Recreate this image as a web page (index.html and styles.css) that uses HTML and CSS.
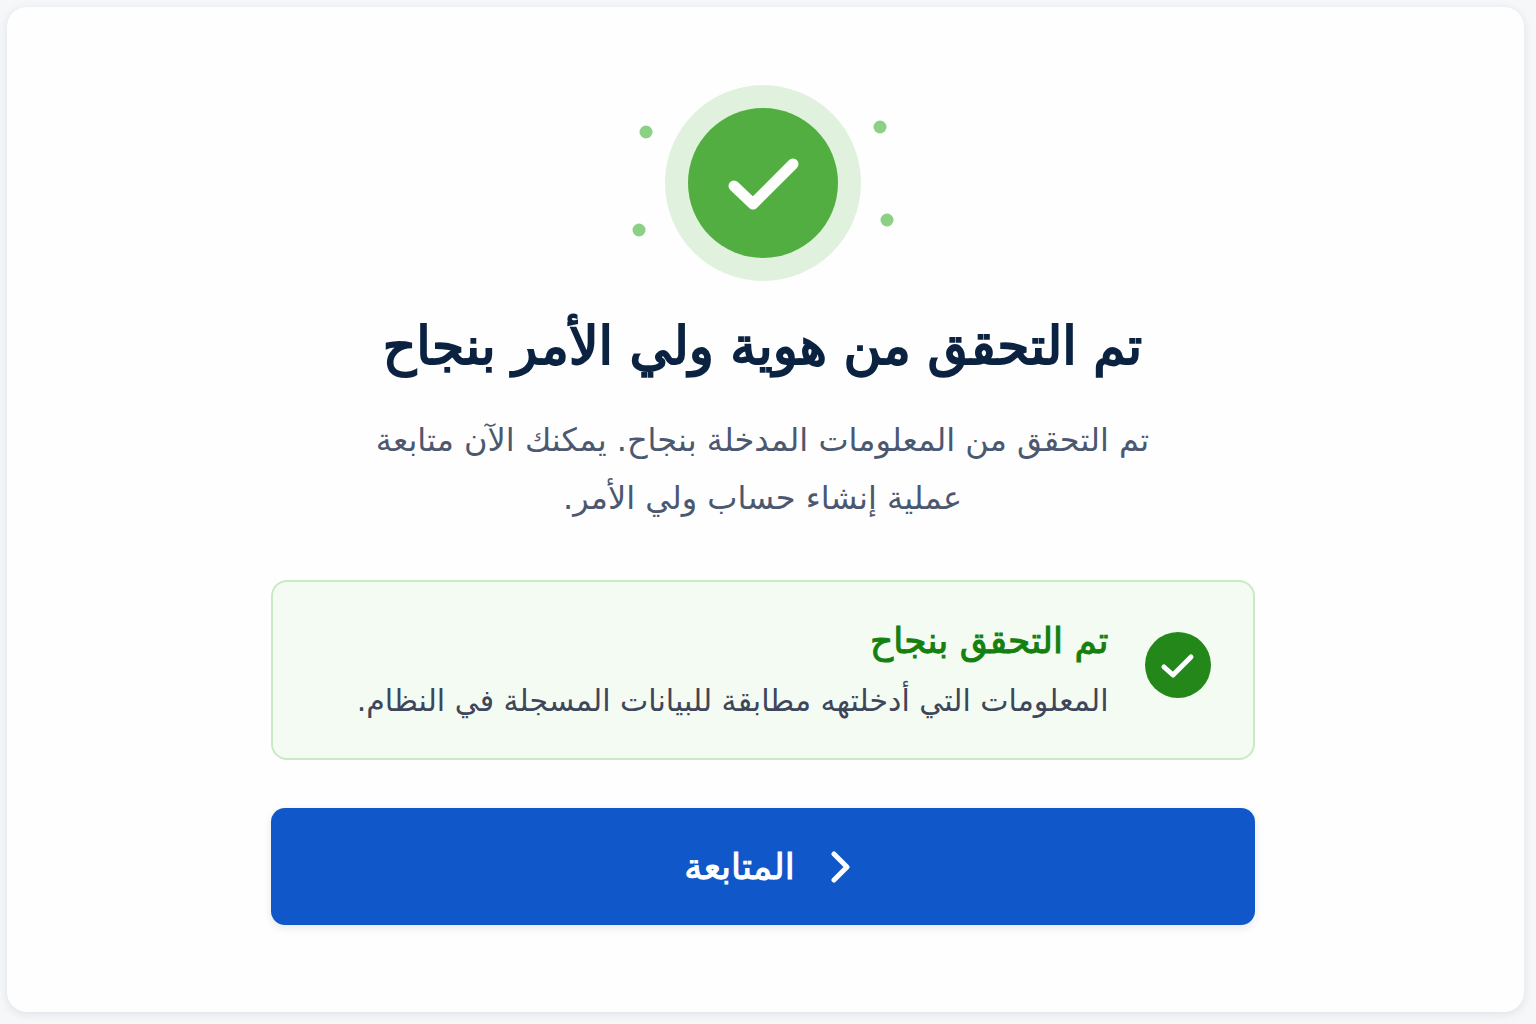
FILE: index.html
```html
<!DOCTYPE html>
<html lang="ar" dir="rtl">
<head>
    <meta charset="UTF-8">
    <meta name="viewport" content="width=device-width, initial-scale=1.0">
    <title>التحقق من هوية ولي الأمر</title>
    <link rel="stylesheet" href="styles.css">
</head>
<body>
    <main class="card">
        <svg class="hero" viewBox="0 0 264 198" aria-hidden="true">
            <circle cx="132" cy="99" r="98" fill="#e0f1de"/>
            <circle cx="132" cy="99" r="75" fill="#52ae40"/>
            <path d="M103 102L122 120L162 80" fill="none" stroke="#fff" stroke-width="11" stroke-linecap="round" stroke-linejoin="round"/>
            <g fill="#8bd083">
                <circle cx="15" cy="48" r="6.500"/>
                <circle cx="8" cy="146" r="6.500"/>
                <circle cx="249" cy="43" r="6.500"/>
                <circle cx="256" cy="136" r="6.500"/>
            </g>
        </svg>

        <h1 class="title">تم التحقق من هوية ولي الأمر بنجاح</h1>
        <p class="subtitle">تم التحقق من المعلومات المدخلة بنجاح. يمكنك الآن متابعة عملية إنشاء حساب ولي الأمر.</p>

        <section class="notice">
            <svg class="notice-icon" viewBox="0 0 66 66" aria-hidden="true">
                <circle cx="33" cy="33" r="33" fill="#24871a"/>
                <path d="M19 35L28 43L46 25" fill="none" stroke="#fff" stroke-width="5" stroke-linecap="round" stroke-linejoin="round"/>
            </svg>
            <div class="notice-body">
                <h2 class="notice-title">تم التحقق بنجاح</h2>
                <p class="notice-text">المعلومات التي أدخلتهه مطابقة للبيانات المسجلة في النظام.</p>
            </div>
        </section>

        <button class="continue" type="button">
            <svg class="chevron" viewBox="0 0 20 32" aria-hidden="true">
                <path d="M3 3L16 16L3 29" fill="none" stroke="#fff" stroke-width="5" stroke-linecap="round" stroke-linejoin="round"/>
            </svg>
            <span>المتابعة</span>
        </button>
    </main>
</body>
</html>
```

FILE: styles.css
```css
* {
    box-sizing: border-box;
}

body {
    margin: 0;
    padding: 7px 12px 12px 7px;
    min-height: 100vh;
    display: flex;
    background: #f5f7f9;
    font-family: "DejaVu Sans", sans-serif;
    color: #4b5870;
}

.card {
    flex: 1;
    display: flex;
    flex-direction: column;
    align-items: center;
    padding: 77px 30px 77px 24px;
    background: #fefefe;
    border-radius: 20px;
    box-shadow: 0 2px 10px rgba(30, 41, 59, 0.1);
}

.hero {
    width: 264px;
    height: 198px;
}

/* semi-bold look: regular glyphs with a thin outline */
.title {
    margin: 22px 0 0;
    font-size: 52px;
    line-height: 84px;
    font-weight: 400;
    -webkit-text-stroke: 2px #0b2341;
    color: #0b2341;
}

.subtitle {
    max-width: 800px;
    margin: 23px 0 0;
    font-size: 32px;
    line-height: 58px;
    text-align: center;
}

.notice {
    display: flex;
    align-items: center;
    gap: 36px;
    width: 100%;
    max-width: 984px;
    min-height: 180px;
    margin-top: 53px;
    padding: 14px 42px 24px;
    background: #f4fbf3;
    border: 2px solid #c9ebc4;
    border-radius: 16px;
}

.notice-icon {
    flex: none;
    width: 66px;
    height: 66px;
}

.notice-body {
    padding-top: 12px;
}

.notice-title {
    margin: 0;
    font-size: 36px;
    line-height: 60px;
    font-weight: 400;
    -webkit-text-stroke: 1px #15800f;
    color: #15800f;
}

.notice-text {
    margin: 0;
    font-size: 30px;
    line-height: 60px;
    color: #3d465a;
}

.continue {
    display: flex;
    align-items: center;
    justify-content: center;
    gap: 36px;
    width: 100%;
    max-width: 984px;
    height: 117px;
    margin-top: 48px;
    padding: 0 0 0 10px;
    border: 0;
    border-radius: 14px;
    background: #1058c9;
    box-shadow: 0 3px 8px rgba(30, 41, 59, 0.1);
    color: #fff;
    font-family: inherit;
    font-size: 36px;
    -webkit-text-stroke: 1px #fff;
    cursor: pointer;
}

.chevron {
    width: 20px;
    height: 32px;
}
```
